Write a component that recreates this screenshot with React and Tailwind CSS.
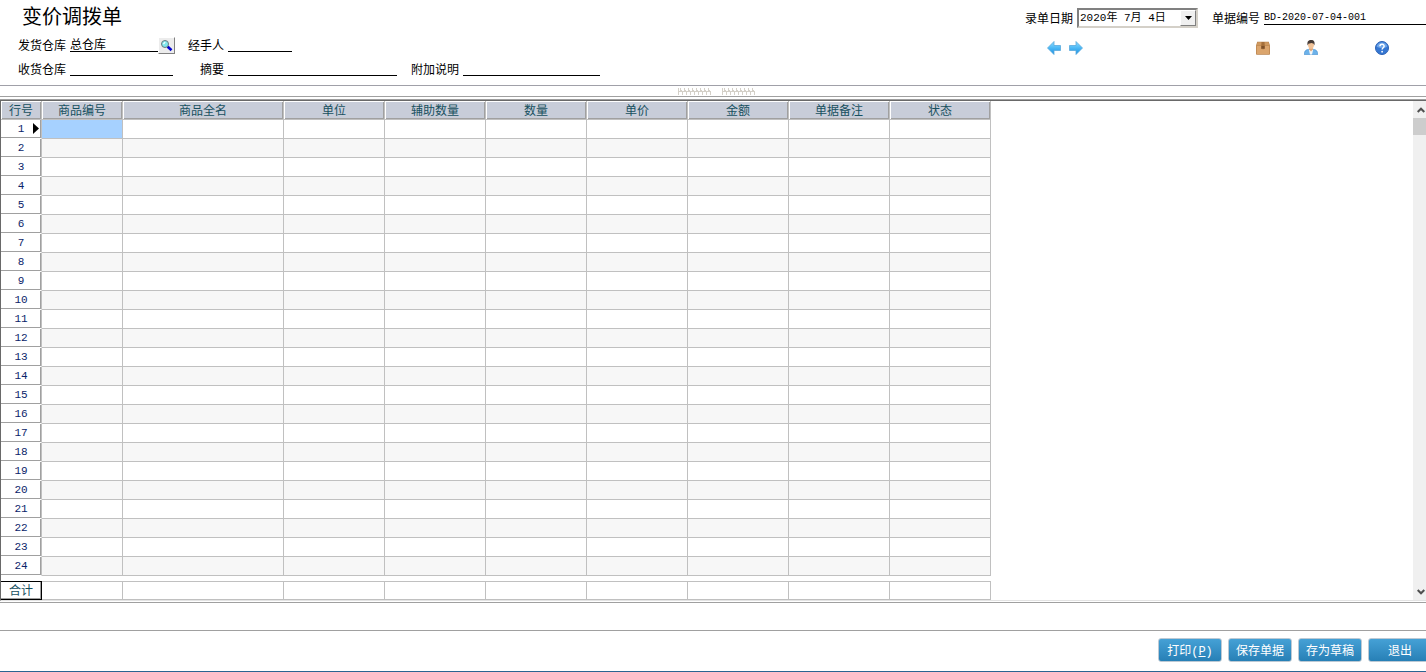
import React, { useState } from "react";

const COLUMNS = [
    { title: "商品编号", width: "w-[81px]" },
    { title: "商品全名", width: "w-[161px]" },
    { title: "单位", width: "w-[101px]" },
    { title: "辅助数量", width: "w-[101px]" },
    { title: "数量", width: "w-[101px]" },
    { title: "单价", width: "w-[101px]" },
    { title: "金额", width: "w-[101px]" },
    { title: "单据备注", width: "w-[101px]" },
    { title: "状态", width: "w-[101px]" },
];

const ROWS = Array.from({ length: 24 }, (_, i) => i + 1);

const Label = ({ className = "", ...rest }) => (
    <label className={`shrink-0 pt-[2px] ${className}`} {...rest} />
);

const LineInput = ({ id, className, ...rest }) => (
    <input
        id={id}
        type="text"
        className={`h-[14px] min-w-0 border-b border-black bg-transparent p-0 outline-none ${className}`}
        {...rest}
    />
);

const SearchIcon = () => (
    <svg width="13" height="13" viewBox="0 0 13 13">
        <path d="M7.500 7.500l4 3.700" stroke="#0000d0" strokeWidth="2.600" />
        <circle cx="5" cy="5" r="3.500" fill="#7fe8ee" stroke="#6c7880" />
        <path d="M3.400 5l1.800-1.800" stroke="#fff" strokeWidth="1.200" />
    </svg>
);

const ArrowIcon = ({ flip }) => (
    <svg width="14" height="14" viewBox="0 0 14 14" className={flip ? "-scale-x-100" : ""}>
        <defs>
            <linearGradient id="arrow" x1="0" y1="0" x2="0" y2="1">
                <stop offset="0" stopColor="#8fdcff" />
                <stop offset=".5" stopColor="#4bb8f5" />
                <stop offset="1" stopColor="#1b8fe2" />
            </linearGradient>
        </defs>
        <path d="M.5 7L7 .5v4h6.500v5H7v4z" fill="url(#arrow)" stroke="#5aa9dc" strokeWidth=".8" />
    </svg>
);

const BoxIcon = () => (
    <svg width="14" height="14" viewBox="0 0 14 14">
        <path d="M1.200.8h11.600L14 4.400V13a.8.8 0 0 1-.8.8H.8A.8.8 0 0 1 0 13V4.400z" fill="#b9824c" />
        <path d="M1.600 1.300h10.800l1 3.200H.6z" fill="#cf995f" />
        <path d="M.7 5h12.600v8H.7z" fill="#dba56d" />
        <path d="M5.500 1h3l.3 4H5.200z" fill="#a56f3a" />
        <path d="M5.200 5h3.600v3.200L8 7.500l-1 1-.9-1-.9.7z" fill="#7f5128" />
    </svg>
);

const PersonIcon = () => (
    <svg width="14" height="15" viewBox="0 0 14 15">
        <path d="M.2 14.700C.2 11.300 1.300 9.900 4.600 9.300h4.800c3.300.6 4.400 2 4.400 5.400z" fill="#6cb2ea" stroke="#3f88c8" strokeWidth=".5" />
        <path d="M4.800 9.400h4.400L8 14.600H6z" fill="#f7f7f7" />
        <path d="M5.200 7.200h3.600v2.400L7 11.600 5.200 9.600z" fill="#dfa678" />
        <path d="M4 4c0-2 6-2 6 0 .2 2.700-1 5-3 5S3.800 6.700 4 4z" fill="#f0c298" />
        <path d="M3.600 5.400C2.800 1.800 4.400.1 7.200.1s4 1.900 3.200 5.300L9.700 3.700 7.600 2.900 4.400 3.700z" fill="#443a36" />
    </svg>
);

const HelpIcon = () => (
    <svg width="14" height="14" viewBox="0 0 14 14">
        <circle cx="7" cy="7" r="6.500" fill="#3577d2" stroke="#2a60b4" />
        <path d="M1.600 5.500a5.600 5.600 0 0 1 10.800 0C9 7.500 5 7.500 1.600 5.500z" fill="#6ea6ea" />
        <path d="M5 5.300C5 2.600 9.200 2.700 9.100 5.200 9.100 6.800 7.100 6.800 7.100 8.600" fill="none" stroke="#fff" strokeWidth="1.500" />
        <circle cx="7.100" cy="10.700" r=".9" fill="#fff" />
    </svg>
);

const Grip = () => (
    <svg width="34" height="7" viewBox="0 0 34 7" stroke="#d4d0c8" fill="none">
        <path d="M.5 0v7M0 3.500h33" />
        {[3, 7, 11, 15, 19, 23, 27, 31].map((x) => (
            <path key={x} d={`M${x - 0.5} 0v3M${x + 0.5} 2v2M${x + 1.5} 4v3`} />
        ))}
    </svg>
);

const IconButton = ({ label, className = "", children }) => (
    <button type="button" aria-label={label} className={className}>
        {children}
    </button>
);

const FooterButton = ({ children }) => (
    <button
        type="button"
        className="h-6 w-16 shrink-0 rounded-[3px] border border-[#bcc9d4] bg-linear-to-b from-[#45a1d6] to-[#2780b6] pt-[2px] text-white"
    >
        {children}
    </button>
);

const BillHeader = () => {
    const [form, setForm] = useState({
        from: "总仓库",
        handler: "",
        to: "",
        summary: "",
        note: "",
        billNo: "BD-2020-07-04-001",
    });

    const handleChange = (e) => {
        setForm({ ...form, [e.target.name]: e.target.value });
    };

    return (
        <header className="flex justify-between pt-px pb-1">
            <div className="pl-[18px]">
                <h1 className="h-8 pl-1 text-[20px] leading-8">变价调拨单</h1>
                <div className="flex h-6 items-center">
                    <div className="flex w-[170px] items-center gap-1">
                        <Label htmlFor="from">发货仓库</Label>
                        <div className="flex items-center">
                            <LineInput id="from" name="from" value={form.from} onChange={handleChange} className="w-[88px]" />
                            <IconButton
                                label="选择仓库"
                                className="flex size-[17px] items-center justify-center border border-t-white border-l-white border-r-[#808080] border-b-[#808080] bg-[#ececec]"
                            >
                                <SearchIcon />
                            </IconButton>
                        </div>
                    </div>
                    <div className="flex items-center gap-1">
                        <Label htmlFor="handler" className="w-9 text-right">经手人</Label>
                        <LineInput id="handler" name="handler" value={form.handler} onChange={handleChange} className="w-16" />
                    </div>
                </div>
                <div className="flex h-6 items-center">
                    <div className="flex w-[170px] items-center gap-1">
                        <Label htmlFor="to">收货仓库</Label>
                        <LineInput id="to" name="to" value={form.to} onChange={handleChange} className="w-[103px]" />
                    </div>
                    <div className="flex items-center gap-1">
                        <Label htmlFor="summary" className="w-9 text-right">摘要</Label>
                        <LineInput id="summary" name="summary" value={form.summary} onChange={handleChange} className="w-[169px]" />
                    </div>
                    <div className="ml-[14px] flex items-center gap-1">
                        <Label htmlFor="note">附加说明</Label>
                        <LineInput id="note" name="note" value={form.note} onChange={handleChange} className="w-[137px]" />
                    </div>
                </div>
            </div>

            <div className="w-[401px] pt-[7px]">
                <div className="flex items-center gap-1">
                    <Label htmlFor="date">录单日期</Label>
                    <div className="relative">
                        <select
                            id="date"
                            className="block h-5 w-[121px] appearance-none border-2 border-t-[#808080] border-r-[#d4d0c8] border-b-[#d4d0c8] border-l-[#808080] bg-white pl-px font-['Liberation_Mono','Noto_Sans_CJK_SC',monospace] text-[11px] outline-none"
                        >
                            <option>2020年 7月 4日</option>
                        </select>
                        {/* drop-down arrow drawn over the select */}
                        <span className="pointer-events-none absolute top-[2px] right-[2px] flex h-4 w-4 items-center justify-center border border-t-white border-r-[#808080] border-b-[#808080] border-l-white bg-[#f0f0f0]">
                            <svg width="7" height="4" viewBox="0 0 7 4">
                                <path d="M0 0h7L3.500 4z" />
                            </svg>
                        </span>
                    </div>
                    <Label htmlFor="billNo" className="ml-[10px]">单据编号</Label>
                    <LineInput
                        id="billNo"
                        name="billNo"
                        value={form.billNo}
                        onChange={handleChange}
                        className="flex-1 font-['Liberation_Mono',monospace] text-[10px]"
                    />
                </div>
                <div className="mt-3 flex items-center pr-[37px] pl-[22px]">
                    <IconButton label="上一单"><ArrowIcon /></IconButton>
                    <IconButton label="下一单" className="ml-2"><ArrowIcon flip /></IconButton>
                    <IconButton label="商品" className="ml-auto"><BoxIcon /></IconButton>
                    <IconButton label="往来" className="ml-[34px]"><PersonIcon /></IconButton>
                    <IconButton label="帮助" className="ml-[57px]"><HelpIcon /></IconButton>
                </div>
            </div>
        </header>
    );
};

const headCell =
    "border-r border-b border-[#c0c0c0] bg-[#c8cdd9] p-0 pt-[2px] font-normal text-[#17505f] shadow-[inset_1px_1px_#fff,inset_-1px_-1px_#a0a0a0]";

const BillTable = () => (
    <table className="table-fixed border-separate border-spacing-0 self-start">
        <thead>
            <tr className="h-[19px]">
                <th className={`w-[41px] ${headCell}`}>行号</th>
                {COLUMNS.map((c) => (
                    <th key={c.title} className={`${c.width} ${headCell}`}>{c.title}</th>
                ))}
            </tr>
        </thead>
        <tbody>
            {ROWS.map((n) => (
                <tr key={n} className="h-[19px] even:bg-[#f7f7f7]">
                    <th className="relative border-r border-b border-r-[#c0c0c0] border-b-white bg-white p-0 font-['Liberation_Mono',monospace] text-[11px] font-normal text-[#0a246a] shadow-[inset_-1px_-1px_#a0a0a0]">
                        {n}
                        {n === 1 && (
                            <svg width="6" height="11" viewBox="0 0 6 11" className="absolute top-[3px] right-[2px]">
                                <path d="M0 0l6 5.500L0 11z" />
                            </svg>
                        )}
                    </th>
                    {COLUMNS.map((c, i) => (
                        <td
                            key={c.title}
                            className={`border-r border-b border-[#c0c0c0] p-0 ${n === 1 && i === 0 ? "bg-[#a6d1ff]" : ""}`}
                        ></td>
                    ))}
                </tr>
            ))}
        </tbody>
        <tfoot>
            <tr className="h-[5px]">
                <td colSpan={10} className="p-0"></td>
            </tr>
            <tr className="h-[19px]">
                <th className="border border-l-0 border-black p-0 pt-px font-normal text-[#17505f] shadow-[inset_-1px_-1px_#a0a0a0]">合计</th>
                {COLUMNS.map((c) => (
                    <td key={c.title} className="border-t border-r border-b border-[#c0c0c0] p-0"></td>
                ))}
            </tr>
        </tfoot>
    </table>
);

const Chevron = ({ down }) => (
    <svg width="8" height="6" viewBox="0 0 8 6" className={down ? "rotate-180" : ""}>
        <path d="M.7 5L4 1.700 7.300 5" fill="none" stroke="#505050" strokeWidth="2" />
    </svg>
);

const ScrollBar = () => (
    <div className="flex w-[13px] flex-col bg-[#f0f0f0]">
        <button type="button" aria-label="向上" className="flex h-[17px] items-center justify-end pr-px">
            <Chevron />
        </button>
        <div className="h-[17px] bg-[#cdcdcd]"></div>
        <button type="button" aria-label="向下" className="mt-auto flex h-[17px] items-center justify-end pr-px">
            <Chevron down />
        </button>
    </div>
);

export default function App() {
    return (
        <div className="flex min-h-screen flex-col overflow-hidden bg-white font-['Liberation_Sans','Noto_Sans_CJK_SC',sans-serif] text-[12px] leading-4 text-black">
            <BillHeader />

            <div className="flex h-3 items-center justify-center gap-[10px] border-t border-b border-t-[#a0a0a8] border-b-[#a0a0a0] pt-px pl-[7px]">
                <Grip />
                <Grip />
            </div>

            <main className="mt-[2px] flex justify-between border-t border-[#a0a0a0]">
                <div className="flex flex-1 justify-between border-t border-b border-l border-t-[#696969] border-b-[#e3e3e3] border-l-[#696969]">
                    <BillTable />
                    <ScrollBar />
                </div>
            </main>

            <div className="mt-px h-[29px] border-t border-b border-[#a0a0a0]"></div>

            <footer className="flex flex-1 justify-end gap-[6px] border-b border-[#2b6491] pt-[7px]">
                <FooterButton>
                    打印<span className="font-['Liberation_Mono',monospace]">(<u>P</u>)</span>
                </FooterButton>
                <FooterButton>保存单据</FooterButton>
                <FooterButton>存为草稿</FooterButton>
                {/* last button runs past the window edge */}
                <div className="-mr-[6px] flex">
                    <FooterButton>退出</FooterButton>
                </div>
            </footer>
        </div>
    );
}
